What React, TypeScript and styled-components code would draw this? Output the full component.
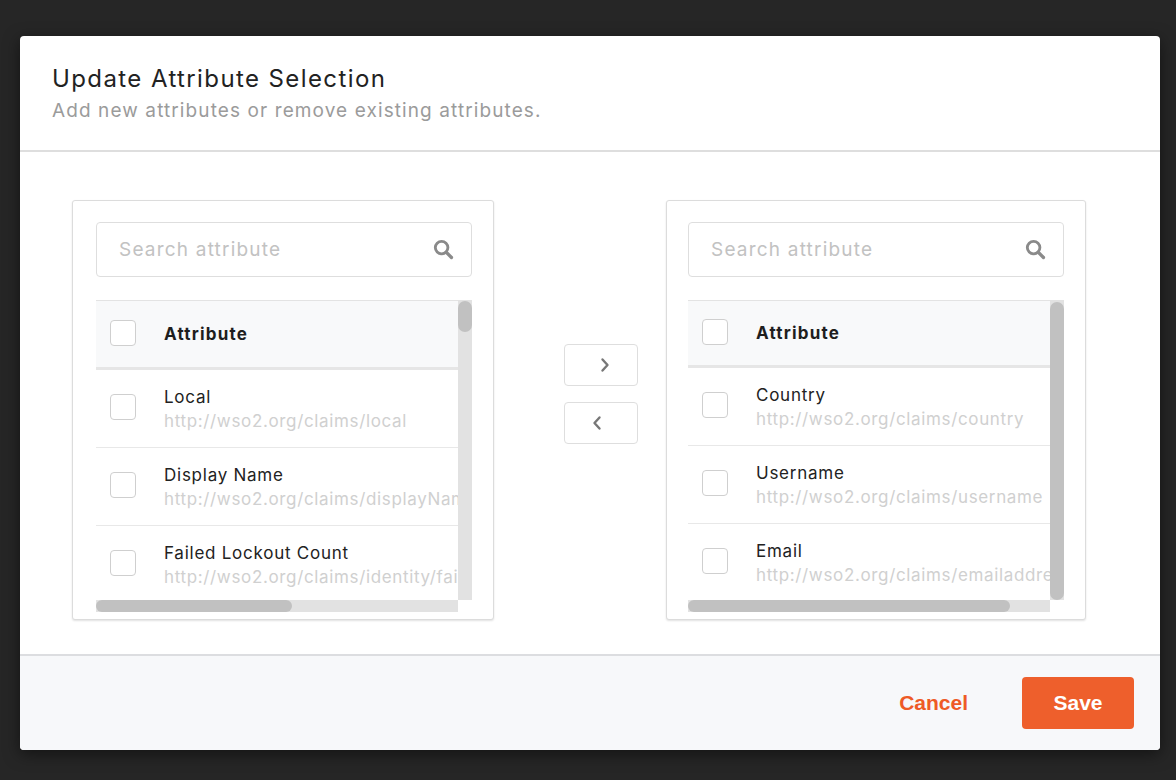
import React from 'react';
import styled, { createGlobalStyle } from 'styled-components';

type Claim = {
  name: string,
  uri: string
};

const GlobalStyle = createGlobalStyle`
  html, body {
    margin: 0;
    padding: 0;
    background: #262626;
  }

  body {
    font-family: Inter, "Open Sans", sans-serif;
    -webkit-font-smoothing: antialiased;
  }
`;

const Page = styled.div`
  width: 1176px;
  height: 780px;
  box-sizing: border-box;
  padding: 36px 16px 30px 20px;
  background: #262626;
`;

const Modal = styled.div`
  width: 1140px;
  height: 714px;
  display: flex;
  flex-direction: column;
  background: #fff;
  border-radius: 4px;
  overflow: hidden;
  box-shadow: 0 4px 16px rgba(0, 0, 0, 0.5);
`;

const Header = styled.div`
  height: 116px;
  box-sizing: border-box;
  padding: 27px 32px 0;
  border-bottom: 2px solid #dedede;
`;

const Title = styled.h1`
  margin: 0;
  font-size: 24px;
  line-height: 32px;
  font-weight: 400;
  letter-spacing: 1.4px;
  color: #222;
`;

const Subtitle = styled.p`
  margin: 3px 0 0;
  font-size: 19px;
  line-height: 26px;
  letter-spacing: 1.1px;
  color: #9b9b9b;
`;

const Content = styled.div`
  flex: 1;
  display: grid;
  grid-template-columns: 422px 1fr 420px;
  align-items: start;
  padding: 48px 74px 0 52px;
`;

const Panel = styled.div<{ $padLeft: number }>`
  height: 420px;
  box-sizing: border-box;
  padding: 21px 22px 0 ${(p) => p.$padLeft}px;
  border: 1px solid #dcdcdc;
  border-radius: 3px;
  box-shadow: 0 1px 2px rgba(0, 0, 0, 0.12);
  background: #fff;
`;

const SearchBox = styled.div`
  width: 376px;
  height: 55px;
  box-sizing: border-box;
  display: flex;
  align-items: center;
  padding: 0 17px 0 22px;
  border: 1.5px solid #dedede;
  border-radius: 4px;
`;

const SearchInput = styled.input`
  flex: 1;
  min-width: 0;
  border: 0;
  outline: none;
  padding: 0;
  font-family: Inter, "Open Sans", sans-serif;
  font-size: 19px;
  letter-spacing: 1.2px;
  color: #333;
  background: transparent;

  &::placeholder {
    color: #c2c2c2;
  }
`;

const ListFrame = styled.div`
  display: grid;
  grid-template-columns: 362px 14px;
  grid-template-rows: 300px 12px;
  margin-top: 23px;
`;

const Viewport = styled.div`
  overflow: hidden;
`;

const ListInner = styled.div<{ $width: number }>`
  width: ${(p) => p.$width}px;
`;

const VTrack = styled.div`
  position: relative;
  background: #e2e2e2;
`;

const HTrack = styled.div`
  position: relative;
  background: #e2e2e2;
`;

const VThumb = styled.div<{ $top: number, $size: number }>`
  position: absolute;
  left: 0;
  right: 0;
  top: ${(p) => p.$top}px;
  height: ${(p) => p.$size}px;
  border-radius: 7px;
  background: #c1c1c1;
`;

const HThumb = styled.div<{ $size: number }>`
  position: absolute;
  top: 0;
  bottom: 0;
  left: 0;
  width: ${(p) => p.$size}px;
  border-radius: 6px;
  background: #c1c1c1;
`;

const HeadRow = styled.div<{ $height: number }>`
  height: ${(p) => p.$height}px;
  display: flex;
  align-items: center;
  gap: 28px;
  padding-left: 14px;
  background: #f8f9fa;
  border-top: 1px solid #e3e3e3;
  border-bottom: 3px solid #e6e6e6;
`;

const HeadLabel = styled.span`
  font-size: 17px;
  font-weight: 700;
  letter-spacing: 1.2px;
  color: #1e1e1e;
`;

const Row = styled.div`
  height: 77px;
  display: flex;
  align-items: center;
  gap: 28px;
  padding-left: 14px;
  border-bottom: 1px solid #e8e8e8;
  white-space: nowrap;
`;

const Check = styled.span`
  flex: none;
  width: 26px;
  height: 26px;
  box-sizing: border-box;
  border: 1.5px solid #cfcfcf;
  border-radius: 4px;
  background: #fff;
  margin-top: -3px;
`;

const ClaimText = styled.div`
  display: flex;
  flex-direction: column;
  margin-top: 0;
`;

const ClaimName = styled.span`
  font-size: 17px;
  line-height: 24px;
  letter-spacing: 0.75px;
  color: #222;
`;

const ClaimUri = styled.span`
  font-size: 17px;
  line-height: 24px;
  letter-spacing: 0.65px;
  color: #d0d0d0;
`;

const Transfer = styled.div`
  justify-self: end;
  margin-right: 28px;
  padding-top: 144px;
  display: flex;
  flex-direction: column;
  gap: 16px;
`;

const MoveButton = styled.button`
  width: 74px;
  height: 42px;
  display: flex;
  align-items: center;
  justify-content: center;
  padding: 0;
  border: 1.5px solid #dedede;
  border-radius: 4px;
  background: #fff;
  cursor: pointer;
`;

const Footer = styled.div`
  height: 96px;
  box-sizing: border-box;
  display: flex;
  align-items: center;
  justify-content: flex-end;
  gap: 28px;
  padding: 0 26px 0 0;
  border-top: 2px solid #dcdde0;
  background: #f7f8fa;
`;

const CancelButton = styled.button`
  border: 0;
  background: transparent;
  padding: 0 26px;
  font-family: "Liberation Sans", Arial, sans-serif;
  font-size: 21px;
  font-weight: 700;
  color: #ee5a26;
  cursor: pointer;
`;

const SaveButton = styled.button`
  width: 112px;
  height: 52px;
  border: 0;
  border-radius: 4px;
  background: #ee5f2c;
  font-family: "Liberation Sans", Arial, sans-serif;
  font-size: 21px;
  font-weight: 700;
  color: #fff;
  cursor: pointer;
`;

const available: Claim[] = [
  { name: 'Local', uri: 'http://wso2.org/claims/local' },
  { name: 'Display Name', uri: 'http://wso2.org/claims/displayName' },
  { name: 'Failed Lockout Count', uri: 'http://wso2.org/claims/identity/failedLoginLockoutCount' },
  { name: 'First Name', uri: 'http://wso2.org/claims/givenname' }
];

const selected: Claim[] = [
  { name: 'Country', uri: 'http://wso2.org/claims/country' },
  { name: 'Username', uri: 'http://wso2.org/claims/username' },
  { name: 'Email', uri: 'http://wso2.org/claims/emailaddress' }
];

const SearchIcon = () => (
  <svg width='21' height='21' viewBox='0 0 20 20' fill='none'>
    <circle cx='8.2' cy='8.2' r='6' stroke='#8a8a8a' strokeWidth='2.7' />
    <path d='M12.6 12.6 L17.6 17.6' stroke='#8a8a8a' strokeWidth='3.1' strokeLinecap='round' />
  </svg>
);

const Chevron = ({ left }: { left?: boolean }) => (
  <svg width='10' height='16' viewBox='0 0 10 16' fill='none' style={{ marginLeft: left ? -8 : 8 }}>
    <path
      d={left ? 'M7.5 2.5 L2.5 8 L7.5 13.5' : 'M2.5 2.5 L7.5 8 L2.5 13.5'}
      stroke='#777'
      strokeWidth='2.4'
      strokeLinecap='round'
      strokeLinejoin='round'
    />
  </svg>
);

type ListProps = {
  claims: Claim[],
  padLeft: number,
  width: number,
  headHeight: number,
  vThumb: [number, number],
  hThumb: number
};

const AttributeList = ({ claims, padLeft, width, headHeight, vThumb, hThumb }: ListProps) => (
  <Panel $padLeft={padLeft}>
    <SearchBox>
      <SearchInput placeholder='Search attribute' />
      <SearchIcon />
    </SearchBox>
    <ListFrame>
      <Viewport>
        <ListInner $width={width}>
          <HeadRow $height={headHeight}>
            <Check />
            <HeadLabel>Attribute</HeadLabel>
          </HeadRow>
          {claims.map((claim) => (
            <Row key={claim.name}>
              <Check />
              <ClaimText>
                <ClaimName>{claim.name}</ClaimName>
                <ClaimUri>{claim.uri}</ClaimUri>
              </ClaimText>
            </Row>
          ))}
        </ListInner>
      </Viewport>
      <VTrack>
        <VThumb $top={vThumb[0]} $size={vThumb[1]} />
      </VTrack>
      <HTrack>
        <HThumb $size={hThumb} />
      </HTrack>
    </ListFrame>
  </Panel>
);

export default function App () {
  return (
    <Page>
      <GlobalStyle />
      <Modal>
        <Header>
          <Title>Update Attribute Selection</Title>
          <Subtitle>Add new attributes or remove existing attributes.</Subtitle>
        </Header>
        <Content>
          <AttributeList
            claims={available}
            padLeft={23}
            width={668}
            headHeight={66}
            vThumb={[1, 31]}
            hThumb={196}
          />
          <Transfer>
            <MoveButton><Chevron /></MoveButton>
            <MoveButton><Chevron left /></MoveButton>
          </Transfer>
          <AttributeList
            claims={selected}
            padLeft={21}
            width={407}
            headHeight={64}
            vThumb={[2, 298]}
            hThumb={322}
          />
        </Content>
        <Footer>
          <CancelButton>Cancel</CancelButton>
          <SaveButton>Save</SaveButton>
        </Footer>
      </Modal>
    </Page>
  );
}
